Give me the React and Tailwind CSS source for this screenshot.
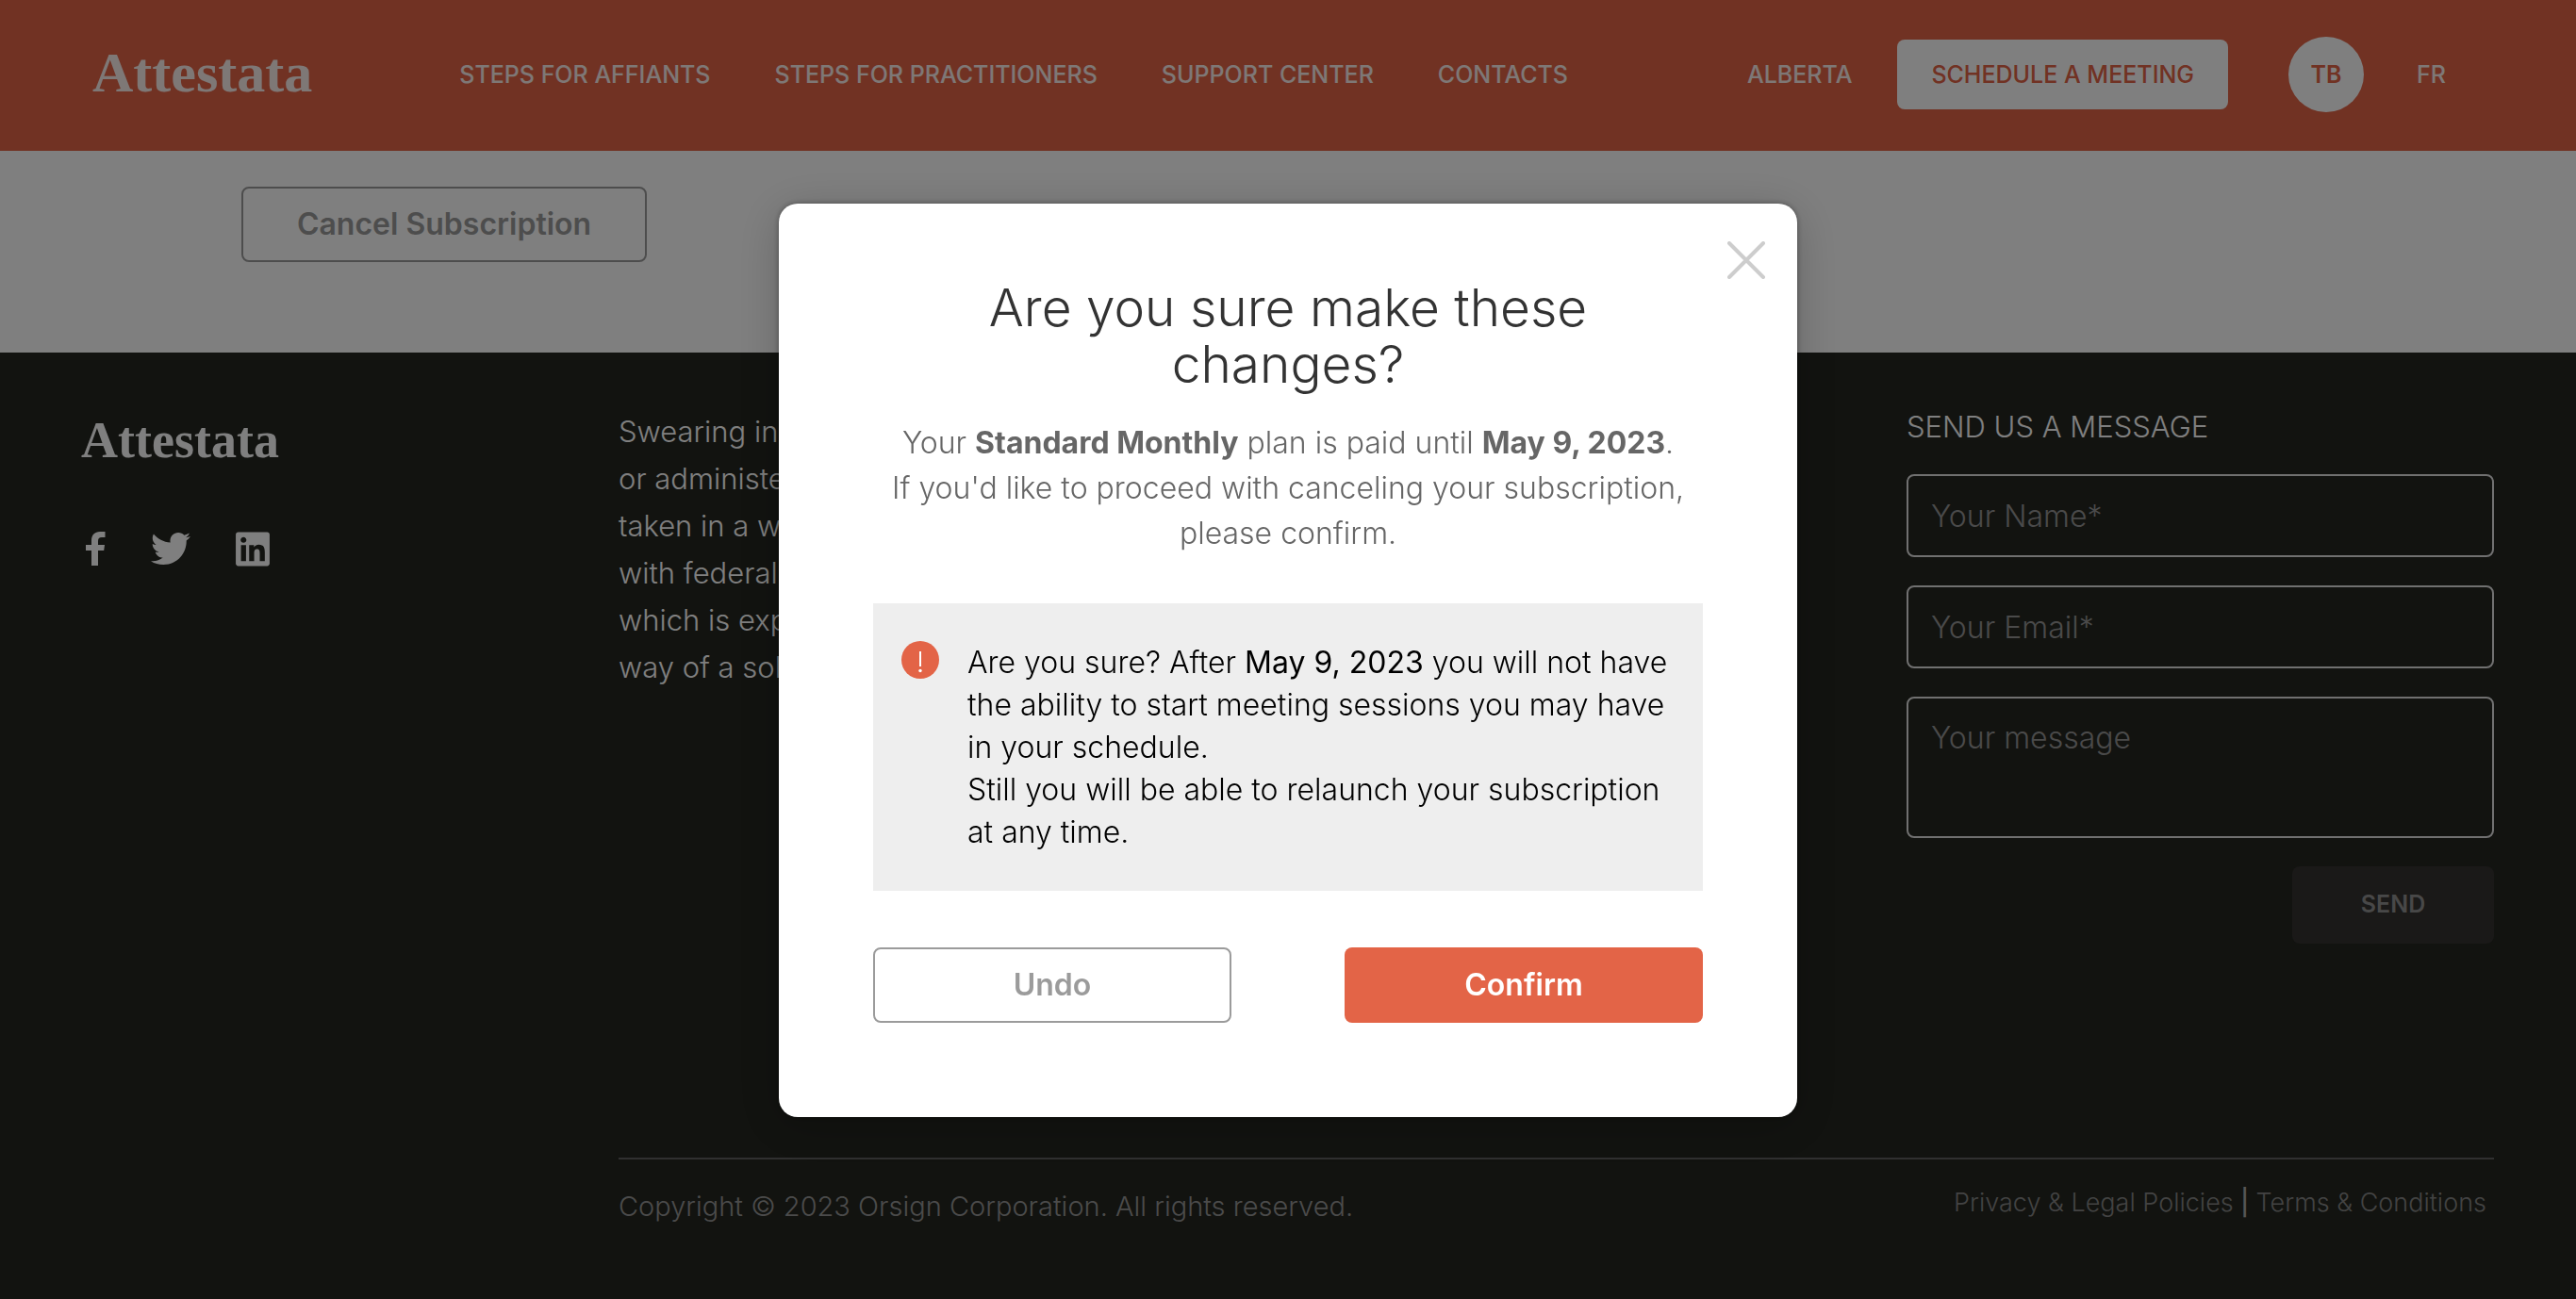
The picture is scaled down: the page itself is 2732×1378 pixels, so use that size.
import React from "react";
import { FaTwitter, FaLinkedin } from "react-icons/fa";

const NAV_LINKS = ["STEPS FOR AFFIANTS", "STEPS FOR PRACTITIONERS", "SUPPORT CENTER", "CONTACTS"];

const ABOUT_LINES = [
  "Swearing in oaths",
  "or administered",
  "taken in a way",
  "with federal law",
  "which is express",
  "way of a solemn",
];

function Header() {
  return (
    <header className="flex min-h-[160px] items-center bg-[#e36447] pr-[138px] pb-[2px] pl-[98px] text-[25px] leading-8 font-medium text-white/90">
      <a href="#home" className="pb-1 font-['Liberation_Serif',serif] text-[60px] leading-[66px] font-bold">
        Attestata
      </a>
      <nav className="ml-[156px] flex gap-[68px]">
        {NAV_LINKS.map((label) => (
          <a key={label} href="#nav" className="whitespace-nowrap">
            {label}
          </a>
        ))}
      </nav>
      <div className="ml-auto flex items-center">
        <a href="#region">ALBERTA</a>
        <button type="button" className="ml-12 h-[74px] rounded-lg bg-white px-9 font-medium whitespace-nowrap text-[#e36447]">
          SCHEDULE A MEETING
        </button>
        <button type="button" className="ml-16 h-20 w-20 rounded-full bg-white font-semibold text-[#e36447]">
          TB
        </button>
        <a href="#fr" className="ml-14">
          FR
        </a>
      </div>
    </header>
  );
}

function ContactForm() {
  return (
    <form className="flex flex-col gap-[30px]">
      <h2 className="text-[31px] leading-10 font-light text-white">SEND US A MESSAGE</h2>
      <input
        type="text"
        aria-label="Your Name"
        placeholder="Your Name*"
        className="h-[88px] w-full rounded-lg border-2 border-[#e0e0e0] bg-transparent px-6 text-[32px] font-light text-white placeholder:text-[#949494]"
      />
      <input
        type="email"
        aria-label="Your Email"
        placeholder="Your Email*"
        className="h-[88px] w-full rounded-lg border-2 border-[#e0e0e0] bg-transparent px-6 text-[32px] font-light text-white placeholder:text-[#949494]"
      />
      <textarea
        aria-label="Your message"
        placeholder="Your message"
        className="h-[150px] w-full resize-none rounded-lg border-2 border-[#e0e0e0] bg-transparent px-6 py-[22px] text-[32px] leading-10 font-light text-white placeholder:text-[#949494]"
      />
      <button type="submit" className="h-[82px] w-[214px] self-end rounded-lg bg-[#343230] text-[25px] font-semibold text-[#909090]">
        SEND
      </button>
    </form>
  );
}

function Footer() {
  return (
    <footer className="grid flex-1 grid-cols-[570px_1fr_623px] grid-rows-[auto_1fr] bg-[#242620] pt-[59px] pr-[87px] pl-[86px]">
      <div className="text-white">
        <a href="#home" className="mt-1 block font-['Liberation_Serif',serif] text-[54px] leading-[60px] font-bold">
          Attestata
        </a>
        <div className="mt-16 flex items-center">
          <a href="#facebook" aria-label="Facebook" className="ml-[5px]">
            <svg viewBox="0 0 21 36" className="h-9 w-[21px]" fill="currentColor">
              <path d="M6 36V20H0v-6h6V9.500C6 3.500 9.500 0 15 0h5.500v6H17c-3 0-4 1.500-4 4v4h7l-.8 6H13v16z" />
            </svg>
          </a>
          <a href="#twitter" aria-label="Twitter" className="ml-12">
            <FaTwitter className="h-[42px] w-[42px]" />
          </a>
          <a href="#linkedin" aria-label="LinkedIn" className="ml-12">
            <FaLinkedin className="h-[41px] w-9" />
          </a>
        </div>
      </div>
      <p className="text-[31px] leading-[50px] font-light whitespace-nowrap text-white">
        {ABOUT_LINES.map((line) => (
          <span key={line} className="block">
            {line}
          </span>
        ))}
      </p>
      <ContactForm />
      <div className="col-span-2 col-start-2 mt-[227px] flex justify-between self-start border-t-2 border-[#606060] leading-10 font-light text-[#969696]">
        <p className="pt-[30px] text-[29px]">Copyright © 2023 Orsign Corporation. All rights reserved.</p>
        <p className="pt-[26px] pr-2 text-[27px] text-[#868686]">
          <a href="#privacy">Privacy &amp; Legal Policies</a>
          <span className="font-medium text-[#aaaaaa]"> | </span>
          <a href="#terms">Terms &amp; Conditions</a>
        </p>
      </div>
    </footer>
  );
}

function ConfirmDialog() {
  return (
    <div
      role="dialog"
      aria-modal="true"
      aria-labelledby="dialog-title"
      className="relative w-full max-w-[1080px] rounded-[20px] bg-white px-[100px] pt-20 pb-[100px] shadow-[0_0_6px_rgba(0,0,0,0.35),0_8px_48px_rgba(0,0,0,0.2)]"
    >
      <button type="button" aria-label="Close" className="absolute top-10 right-[34px] text-[#cdcdcd]">
        <svg viewBox="0 0 40 40" className="h-10 w-10" fill="none" stroke="currentColor" strokeWidth="4" strokeLinecap="round">
          <path d="M2 2l36 36M38 2L2 38" />
        </svg>
      </button>
      <h1 id="dialog-title" className="px-[60px] text-center text-[55px] leading-[60px] font-light text-[#333333]">
        Are you sure make these changes?
      </h1>
      <p className="mt-[30px] text-center text-[32px] leading-[48px] font-light text-[#666666]">
        Your <strong className="font-bold">Standard Monthly</strong> plan is paid until{" "}
        <strong className="font-bold">May 9, 2023</strong>.
        <br />
        If you'd like to proceed with canceling your subscription, please confirm.
      </p>
      <div className="mt-[50px] flex gap-[30px] bg-[#eeeeee] px-[30px] py-10">
        <svg viewBox="0 0 40 40" className="h-10 w-10 shrink-0" aria-hidden="true">
          <circle cx="20" cy="20" r="20" fill="#e36447" />
          <rect x="19" y="11" width="2" height="16" fill="#fff" />
          <circle cx="20" cy="31.500" r="1.700" fill="#fff" />
        </svg>
        <p className="text-[32px] leading-[45px] font-light text-black">
          Are you sure? After <span className="font-normal">May 9, 2023</span> you will not have the ability to start
          meeting sessions you may have in your schedule.
          <br />
          Still you will be able to relaunch your subscription at any time.
        </p>
      </div>
      <div className="mt-[60px] grid grid-cols-2 gap-[120px] text-[32px]">
        <button type="button" className="h-20 rounded-lg border-2 border-[#9b9b9b] font-semibold text-[#9b9b9b]">
          Undo
        </button>
        <button type="button" className="h-20 rounded-lg bg-[#e36447] font-semibold text-white">
          Confirm
        </button>
      </div>
    </div>
  );
}

export default function App() {
  return (
    <div className="flex min-h-screen flex-col bg-white font-['Inter',sans-serif]">
      <Header />
      <main className="px-[256px] pt-[38px] pb-24">
        <button type="button" className="block h-20 w-[430px] rounded-lg border-2 border-[#9b9b9b] text-[32px] font-semibold text-[#9b9b9b]">
          Cancel Subscription
        </button>
      </main>
      <Footer />
      <div className="fixed inset-0 flex items-start justify-center bg-black/50 pt-[216px]">
        <ConfirmDialog />
      </div>
    </div>
  );
}
